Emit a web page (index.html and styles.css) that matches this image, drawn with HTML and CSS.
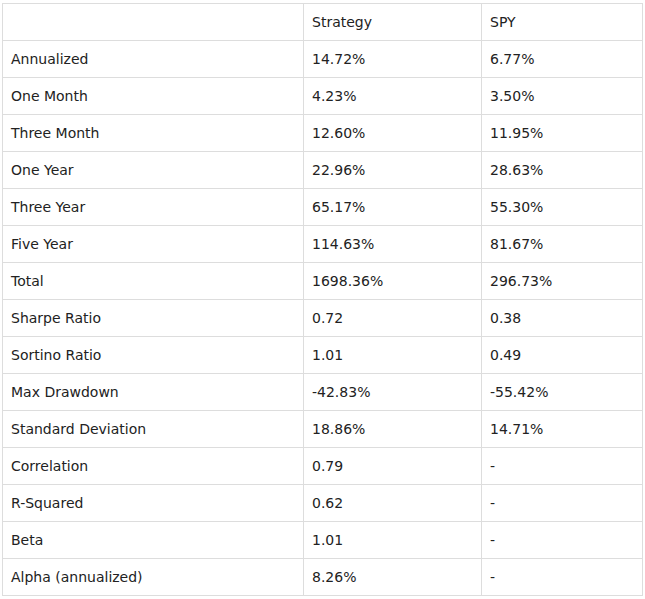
FILE: index.html
```html
<!DOCTYPE html>
<html>
<head>
<meta charset="utf-8">
<link rel="stylesheet" href="styles.css">
</head>
<body>
<table class="stats">
  <colgroup>
    <col class="c-label">
    <col class="c-strat">
    <col class="c-spy">
  </colgroup>
  <thead>
    <tr><th></th><th>Strategy</th><th>SPY</th></tr>
  </thead>
  <tbody>
    <tr><td>Annualized</td><td>14.72%</td><td>6.77%</td></tr>
    <tr><td>One Month</td><td>4.23%</td><td>3.50%</td></tr>
    <tr><td>Three Month</td><td>12.60%</td><td>11.95%</td></tr>
    <tr><td>One Year</td><td>22.96%</td><td>28.63%</td></tr>
    <tr><td>Three Year</td><td>65.17%</td><td>55.30%</td></tr>
    <tr><td>Five Year</td><td>114.63%</td><td>81.67%</td></tr>
    <tr><td>Total</td><td>1698.36%</td><td>296.73%</td></tr>
    <tr><td>Sharpe Ratio</td><td>0.72</td><td>0.38</td></tr>
    <tr><td>Sortino Ratio</td><td>1.01</td><td>0.49</td></tr>
    <tr><td>Max Drawdown</td><td>-42.83%</td><td>-55.42%</td></tr>
    <tr><td>Standard Deviation</td><td>18.86%</td><td>14.71%</td></tr>
    <tr><td>Correlation</td><td>0.79</td><td>-</td></tr>
    <tr><td>R-Squared</td><td>0.62</td><td>-</td></tr>
    <tr><td>Beta</td><td>1.01</td><td>-</td></tr>
    <tr><td>Alpha (annualized)</td><td>8.26%</td><td>-</td></tr>
  </tbody>
</table>
</body>
</html>
```

FILE: styles.css
```css
html, body {
  margin: 0;
  padding: 0;
  background: #ffffff;
}

body {
  padding: 3px 0 0 2px;
  font-family: "DejaVu Sans", Verdana, sans-serif;
  font-size: 14px;
  color: #222222;
}

.stats {
  border-collapse: collapse;
  width: 640px;
  table-layout: fixed;
}

.c-label { width: 301px; }
.c-strat { width: 178px; }
.c-spy { width: 161px; }

.stats th,
.stats td {
  border: 1px solid #dddddd;
  height: 37px;
  padding: 0 8px;
  box-sizing: border-box;
  text-align: left;
  font-weight: normal;
  vertical-align: middle;
  line-height: 17px;
}
```
